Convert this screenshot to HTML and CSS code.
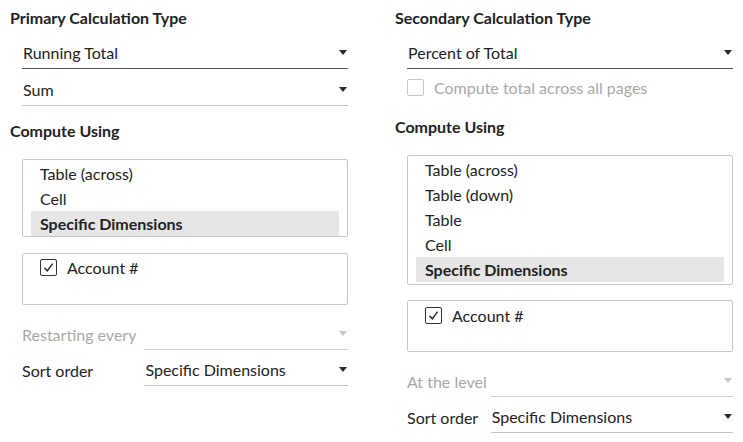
FILE: index.html
```html
<!DOCTYPE html>
<html lang="en">
<head>
<meta charset="utf-8">
<title>Table Calculation</title>
<link rel="stylesheet" href="styles.css">
</head>
<body>
<div class="page">
  <section class="col">
    <h2 class="heading">Primary Calculation Type</h2>
    <div class="select select--strong select--first"><span class="select__value">Running Total</span><span class="caret"></span></div>
    <div class="select select--second"><span class="select__value">Sum</span><span class="caret"></span></div>
    <h2 class="heading heading--compute">Compute Using</h2>
    <ul class="listbox">
      <li class="listbox__item">Table (across)</li>
      <li class="listbox__item">Cell</li>
      <li class="listbox__item listbox__item--selected">Specific Dimensions</li>
    </ul>
    <div class="dimbox">
      <div class="check"><span class="check__box check__box--on"><svg viewBox="0 0 17 17" width="17" height="17"><path d="M4.5 8.8 L7.3 11.8 L12.6 4.6" fill="none" stroke="#222" stroke-width="1.4"/></svg></span><span class="check__label">Account #</span></div>
    </div>
    <div class="fields fields--left">
      <span class="fields__label fields__label--disabled">Restarting every</span>
      <div class="select select--disabled"><span class="select__value"></span><span class="caret"></span></div>
      <span class="fields__label">Sort order</span>
      <div class="select"><span class="select__value">Specific Dimensions</span><span class="caret"></span></div>
    </div>
  </section>
  <section class="col">
    <h2 class="heading">Secondary Calculation Type</h2>
    <div class="select select--strong select--first"><span class="select__value">Percent of Total</span><span class="caret"></span></div>
    <div class="check check--disabled"><span class="check__box"></span><span class="check__label">Compute total across all pages</span></div>
    <h2 class="heading heading--compute2">Compute Using</h2>
    <ul class="listbox listbox--tall">
      <li class="listbox__item">Table (across)</li>
      <li class="listbox__item">Table (down)</li>
      <li class="listbox__item">Table</li>
      <li class="listbox__item">Cell</li>
      <li class="listbox__item listbox__item--selected">Specific Dimensions</li>
    </ul>
    <div class="dimbox dimbox--right">
      <div class="check"><span class="check__box check__box--on"><svg viewBox="0 0 17 17" width="17" height="17"><path d="M4.5 8.8 L7.3 11.8 L12.6 4.6" fill="none" stroke="#222" stroke-width="1.4"/></svg></span><span class="check__label">Account #</span></div>
    </div>
    <div class="fields fields--right">
      <span class="fields__label fields__label--disabled">At the level</span>
      <div class="select select--disabled"><span class="select__value"></span><span class="caret"></span></div>
      <span class="fields__label">Sort order</span>
      <div class="select"><span class="select__value">Specific Dimensions</span><span class="caret"></span></div>
    </div>
  </section>
</div>
</body>
</html>
```
FILE: styles.css
```css
* { box-sizing: border-box; }
html, body { margin: 0; padding: 0; background: #fff; }
body {
  font-family: Lato, "Liberation Sans", sans-serif;
  font-size: 16px;
  color: #222;
}
.page {
  display: grid;
  grid-template-columns: 385px 348px;
  padding-left: 10px;
  width: 743px;
  height: 442px;
  overflow: hidden;
}
.col { display: flex; flex-direction: column; }
.heading {
  margin: 8px 0 0 0;
  font-size: 16px;
  font-weight: 700;
  line-height: 20px;
  color: #222;
}
.heading--compute { margin-top: 15px; }
.heading--compute2 { margin-top: 20px; }

.select {
  display: flex;
  align-items: center;
  height: 31px;
  border-bottom: 1px solid #c4c4c4;
  padding: 0 1px 1px 1px;
}
.select--first { margin: 10px 0 0 12px; width: 326px; }
.select--second { margin: 6px 0 0 12px; width: 326px; }
.select--strong { border-bottom-color: #555; }
.select__value { flex: 1; white-space: nowrap; }
.caret {
  width: 0; height: 0;
  border-left: 4px solid transparent;
  border-right: 4px solid transparent;
  border-top: 5px solid #2a2a2a;
}
.select--disabled .caret { border-top-color: #c8c8c8; }
.select--disabled { border-bottom-color: #d0d0d0; }

.listbox {
  list-style: none;
  margin: 18px 0 0 12px;
  padding: 1px 8px 0 8px;
  width: 326px;
  border: 1px solid #c6c6c6;
  border-radius: 2px;
}
.listbox--tall { padding-bottom: 2px; }
.listbox__item {
  height: 25px;
  line-height: 25px;
  padding-left: 9px;
  color: #222;
}
.listbox__item--selected { background: #e6e6e6; font-weight: 700; }

.dimbox {
  margin: 16px 0 0 12px;
  width: 326px;
  height: 52px;
  border: 1px solid #c6c6c6;
  border-radius: 2px;
  padding: 4px 0 0 17px;
}
.dimbox--right { margin-top: 15px; padding-top: 5px; height: 52px; }

.check { display: flex; align-items: center; height: 18px; gap: 10px; }
.check__box {
  width: 17px; height: 17px;
  border: 1px solid #333;
  border-radius: 2px;
  display: flex;
  position: relative;
}
.check__box svg { position: absolute; left: -1px; top: -1px; }
.check--disabled { margin: 8px 0 0 12px; height: 20px; color: #a8a8a8; }
.check--disabled .check__box { border-color: #c8c8c8; }

.fields {
  display: grid;
  grid-template-columns: auto 1fr;
  column-gap: 8px;
  row-gap: 5px;
  align-items: center;
  margin: 14px 0 0 12px;
  width: 326px;
}
.fields--right { margin-top: 14px; column-gap: 4px; }
.fields__label { white-space: nowrap; }
.fields__label--disabled { color: #a8a8a8; }
```
